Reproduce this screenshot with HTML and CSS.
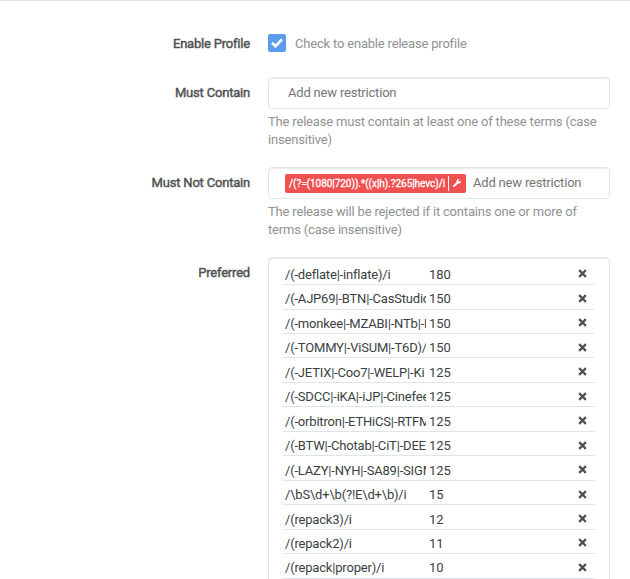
FILE: index.html
```
<!DOCTYPE html>
<html lang="en">
<head>
<meta charset="utf-8">
<title>Release Profile</title>
<link rel="stylesheet" href="styles.css">
</head>
<body>
<form class="form">
  <div class="group group-enable">
    <div class="label">Enable Profile</div>
    <div class="field check-field">
      <span class="checkbox"><svg width="12" height="10" viewBox="0 0 12 10"><path d="M1 4.8 4.5 8.2 11 1.4" fill="none" stroke="#fff" stroke-width="2.7"/></svg></span>
      <span class="check-text">Check to enable release profile</span>
    </div>
  </div>
  <div class="group group-text">
    <div class="label">Must Contain</div>
    <div class="field">
      <div class="input input-empty"><span class="placeholder">Add new restriction</span></div>
      <div class="help">The release must contain at least one of these terms (case insensitive)</div>
    </div>
  </div>
  <div class="group group-text">
    <div class="label">Must Not Contain</div>
    <div class="field">
      <div class="input">
        <span class="tag"><span class="tag-text">/(?=(1080|720)).*((x|h).?265|hevc)/i</span><span class="tag-edit"><svg width="8" height="8" viewBox="0 0 512 512"><path fill="#fff" d="M507 109c-2-10-14-12-21-5l-74 74-68-11-11-68 74-74c7-7 4-19-5-21C353-8 300 6 262 43c-40 41-52 100-35 152L20 402c-27 27-27 71 0 98 27 16 63 19 90-8l207-207c52 17 111 5 152-35 37-38 51-91 38-141z"/></svg></span></span>
        <span class="placeholder">Add new restriction</span>
      </div>
      <div class="help">The release will be rejected if it contains one or more of terms (case insensitive)</div>
    </div>
  </div>
  <div class="group">
    <div class="label">Preferred</div>
    <div class="field list">
      <div class="row"><span class="term">/(-deflate|-inflate)/i</span><span class="score">180</span><svg class="remove" viewBox="0 0 8 8"><path d="M1 1 7 7M7 1 1 7"/></svg></div>
      <div class="row"><span class="term">/(-AJP69|-BTN|-CasStudio</span><span class="score">150</span><svg class="remove" viewBox="0 0 8 8"><path d="M1 1 7 7M7 1 1 7"/></svg></div>
      <div class="row"><span class="term">/(-monkee|-MZABI|-NTb|-N</span><span class="score">150</span><svg class="remove" viewBox="0 0 8 8"><path d="M1 1 7 7M7 1 1 7"/></svg></div>
      <div class="row"><span class="term">/(-TOMMY|-ViSUM|-T6D)/</span><span class="score">150</span><svg class="remove" viewBox="0 0 8 8"><path d="M1 1 7 7M7 1 1 7"/></svg></div>
      <div class="row"><span class="term">/(-JETIX|-Coo7|-WELP|-Ki</span><span class="score">125</span><svg class="remove" viewBox="0 0 8 8"><path d="M1 1 7 7M7 1 1 7"/></svg></div>
      <div class="row"><span class="term">/(-SDCC|-iKA|-iJP|-Cinefee</span><span class="score">125</span><svg class="remove" viewBox="0 0 8 8"><path d="M1 1 7 7M7 1 1 7"/></svg></div>
      <div class="row"><span class="term">/(-orbitron|-ETHiCS|-RTFM</span><span class="score">125</span><svg class="remove" viewBox="0 0 8 8"><path d="M1 1 7 7M7 1 1 7"/></svg></div>
      <div class="row"><span class="term">/(-BTW|-Chotab|-CiT|-DEE</span><span class="score">125</span><svg class="remove" viewBox="0 0 8 8"><path d="M1 1 7 7M7 1 1 7"/></svg></div>
      <div class="row"><span class="term">/(-LAZY|-NYH|-SA89|-SIGM</span><span class="score">125</span><svg class="remove" viewBox="0 0 8 8"><path d="M1 1 7 7M7 1 1 7"/></svg></div>
      <div class="row"><span class="term">/\bS\d+\b(?!E\d+\b)/i</span><span class="score">15</span><svg class="remove" viewBox="0 0 8 8"><path d="M1 1 7 7M7 1 1 7"/></svg></div>
      <div class="row"><span class="term">/(repack3)/i</span><span class="score">12</span><svg class="remove" viewBox="0 0 8 8"><path d="M1 1 7 7M7 1 1 7"/></svg></div>
      <div class="row"><span class="term">/(repack2)/i</span><span class="score">11</span><svg class="remove" viewBox="0 0 8 8"><path d="M1 1 7 7M7 1 1 7"/></svg></div>
      <div class="row"><span class="term">/(repack|proper)/i</span><span class="score">10</span><svg class="remove" viewBox="0 0 8 8"><path d="M1 1 7 7M7 1 1 7"/></svg></div>
    </div>
  </div>
</form>
</body>
</html>
```
FILE: styles.css
```
* { box-sizing: border-box; }
body {
  margin: 0;
  height: 579px;
  overflow: hidden;
  background: #fff;
  border-top: 1px solid #e0e0e0;
  font: 13px/18px Roboto, "Liberation Sans", sans-serif;
  letter-spacing: -.19px;
  color: #3a3f41;
}
.form { padding: 27px 20px 0 0; }
.group { display: flex; }
.group-enable { height: 49px; }
.group-text { height: 90px; }
.label {
  width: 250px;
  margin-right: 18px;
  padding-top: 7px;
  text-align: right;
  letter-spacing: -.2px;
  color: #515253;
  -webkit-text-stroke: .45px #515253;
}
.field { flex: 1; min-width: 0; }
.check-field { display: flex; align-items: flex-start; padding-top: 6px; }
.checkbox {
  display: flex;
  align-items: center;
  justify-content: center;
  width: 18px;
  height: 18px;
  margin-right: 9px;
  border-radius: 2px;
  background: #5d9cec;
}
.check-text { padding-top: 1px; color: #909293; }
.input {
  display: flex;
  align-items: center;
  height: 32px;
  padding-left: 16px;
  border: 1px solid #dde6e9;
  border-radius: 4px;
  box-shadow: inset 0 1px 1px rgba(0, 0, 0, .075);
}
.input-empty { padding-left: 19px; }
.placeholder { color: #757575; }
.tag {
  display: flex;
  align-items: center;
  height: 19px;
  width: 181px;
  margin-right: 7px;
  padding-left: 4px;
  border-radius: 2px;
  background: #f05050;
  color: #fff;
  font-size: 10px;
  line-height: 15px;
  letter-spacing: -.04px;
  white-space: nowrap;
}
.tag-text { flex: 0 0 159px; -webkit-text-stroke: .3px #fff; }
.tag-edit {
  display: flex;
  align-items: center;
  height: 15px;
  padding-left: 4px;
  border-left: 1px solid #fff;
}
.help { padding-top: 4px; letter-spacing: -.18px; color: #909293; }
.list {
  height: 340px;
  padding: 2.6px 14px 0;
  border: 1px solid #dde6e9;
  border-radius: 4px;
  box-shadow: inset 0 1px 1px rgba(0, 0, 0, .075);
}
.row {
  display: flex;
  align-items: center;
  height: 24.47px;
  padding: 5px 8px 0 2px;
  border-bottom: 1px solid #dde6e9;
}
.term { width: 141px; overflow: hidden; white-space: nowrap; }
.score { flex: 1; padding-left: 3px; letter-spacing: 0; }
.remove {
  width: 9px;
  height: 9px;
  margin-bottom: 2px;
  fill: none;
  stroke: #4c4f51;
  stroke-width: 1.9;
}
```
